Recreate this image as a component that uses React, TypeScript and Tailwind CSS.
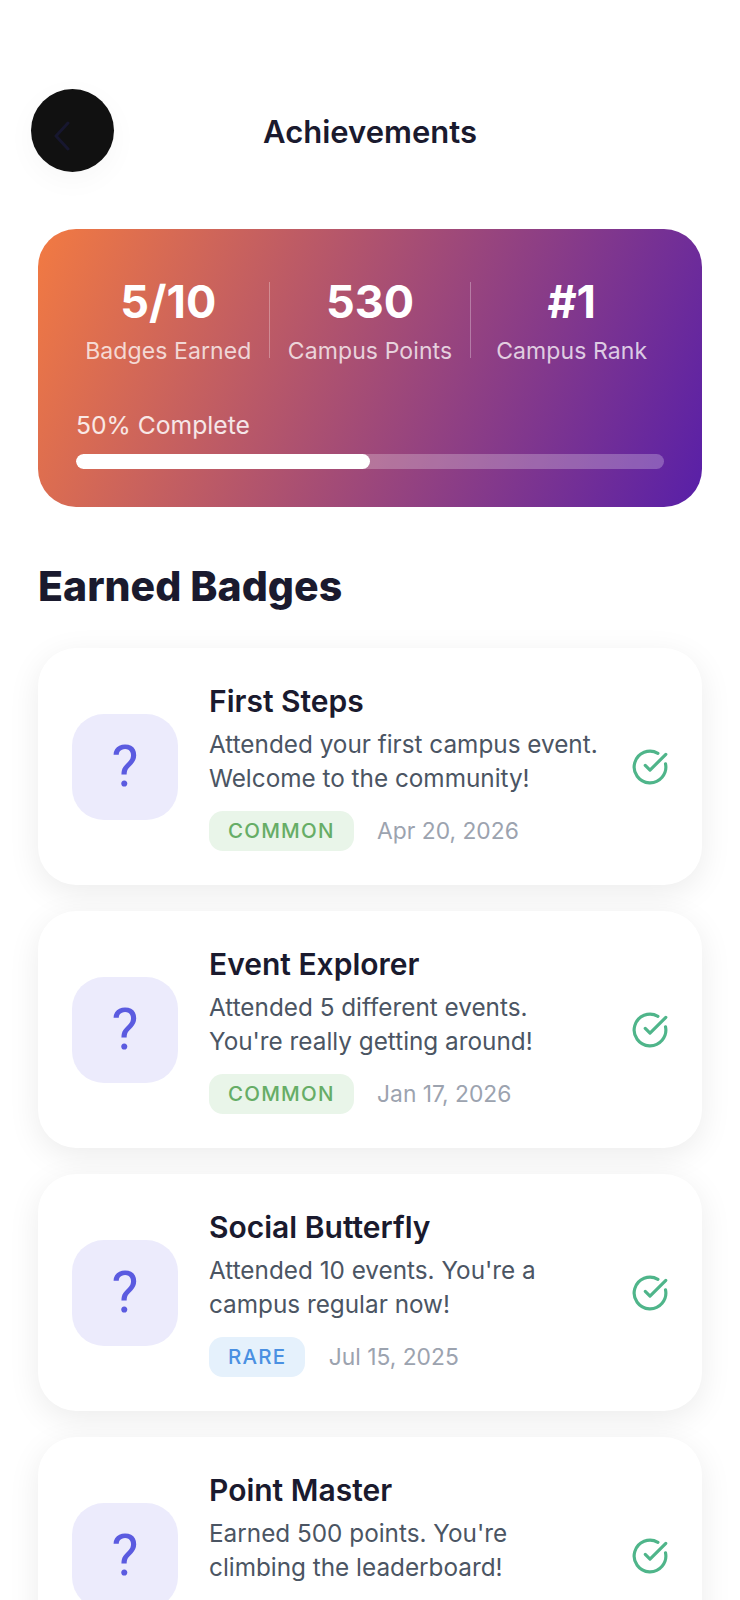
import { CircleCheckBig } from "lucide-react";

type Badge = { title: string; l1: string; l2: string; tag?: string; tagCls: string; date?: string };

const badges: Badge[] = [
  { title: "First Steps", l1: "Attended your first campus event.", l2: "Welcome to the community!", tag: "COMMON", tagCls: "bg-[#e9f5e9] text-[#66ad66]", date: "Apr 20, 2026" },
  { title: "Event Explorer", l1: "Attended 5 different events.", l2: "You're really getting around!", tag: "COMMON", tagCls: "bg-[#e9f5e9] text-[#66ad66]", date: "Jan 17, 2026" },
  { title: "Social Butterfly", l1: "Attended 10 events. You're a", l2: "campus regular now!", tag: "RARE", tagCls: "bg-[#e5f1fc] text-[#4a90e2]", date: "Jul 15, 2025" },
  { title: "Point Master", l1: "Earned 500 points. You're", l2: "climbing the leaderboard!", tagCls: "bg-[#efeff1] w-[88px]" },
];

function Stat({ value, label }: { value: string; label: string }) {
  return (
    <div className="flex-1 flex flex-col items-center">
      <div className="text-[45px] leading-[40px] font-bold text-white">{value}</div>
      <div className="text-[23px] leading-[30px] mt-[14px] tracking-[0.1px] text-white/75 whitespace-nowrap">{label}</div>
    </div>
  );
}

function Divider() {
  return <div className="w-px h-[76px] bg-white/30 shrink-0" />;
}

export default function App() {
  return (
    <div className="h-[1600px] overflow-hidden bg-white font-['Inter',sans-serif] px-[38px] pt-[89px]">
      <div className="relative flex items-center justify-center h-[83px]">
        <button className="absolute left-[-7px] top-0 w-[83px] h-[83px] rounded-full bg-[#111111] shadow-[0_8px_30px_rgba(0,0,0,0.035)] flex items-center justify-center pr-[22px] pt-[11px]">
          <svg width="18" height="30" viewBox="0 0 18 30" fill="none" stroke="#17172f" strokeWidth="3" strokeLinecap="round" strokeLinejoin="round">
            <path d="M15 2 L3 15 L15 28" />
          </svg>
        </button>
        <h1 className="mt-[4px] text-[31px] font-semibold text-[#1a1a2e]">Achievements</h1>
      </div>

      <div className="mt-[57px] h-[278px] rounded-[38px] bg-linear-[112deg,#f27a42,#581fa8] px-[38px] pt-[53px]">
        <div className="flex -mx-[8px]">
          <Stat value="5/10" label="Badges Earned" />
          <Divider />
          <Stat value="530" label="Campus Points" />
          <Divider />
          <Stat value="#1" label="Campus Rank" />
        </div>
        <div className="mt-[43px] text-[24.7px] leading-[32px] text-white/85">50% Complete</div>
        <div className="mt-[13px] h-[15px] rounded-full bg-white/25 overflow-hidden">
          <div className="h-full w-1/2 rounded-full bg-white" />
        </div>
      </div>

      <h2 className="mt-[49px] text-[41px] leading-[60px] font-extrabold text-[#1a1a2e]">Earned Badges</h2>

      <div className="mt-[32px] flex flex-col gap-[26px]">
        {badges.map((b) => (
          <div key={b.title} className="flex items-center h-[237px] shrink-0 rounded-[38px] bg-white shadow-[0_8px_32px_rgba(0,0,0,0.08)] pl-[34px] pr-[33px]">
            <div className="w-[106px] h-[106px] rounded-[32px] bg-[#ecebfc] flex items-center justify-center font-['Roboto',sans-serif] text-[57px] text-[#5b5be0] shrink-0">?</div>
            <div className="ml-[31px] flex-1 min-w-0">
              <div className="text-[30px] leading-[38px] font-semibold text-[#1a1a2e]">{b.title}</div>
              <div className="mt-[6.5px] text-[24.3px] leading-[34.5px] text-[#4b5563]">
                <div>{b.l1}</div>
                <div>{b.l2}</div>
              </div>
              <div className="mt-[15px] flex items-center gap-[23.5px]">
                <span className={`h-[40px] px-[19px] pt-[1px] rounded-[14px] flex items-center text-[20.5px] font-[550] tracking-[1.2px] ${b.tagCls}`}>{b.tag}</span>
                {b.date && <span className="text-[22.8px] text-[#9ca3af]">{b.date}</span>}
              </div>
            </div>
            <CircleCheckBig size={38} strokeWidth={2} className="text-[#4fb58a] shrink-0" />
          </div>
        ))}
      </div>
    </div>
  );
}
